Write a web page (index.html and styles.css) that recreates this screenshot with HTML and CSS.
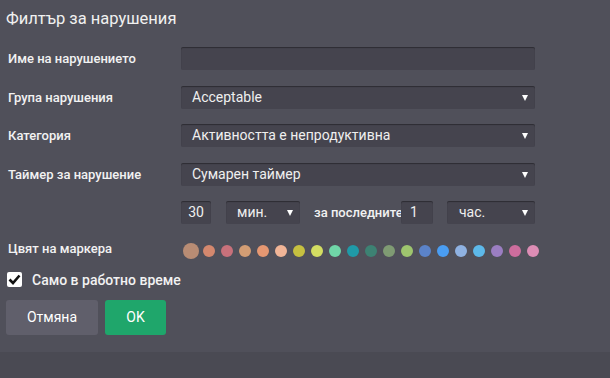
FILE: index.html
```html
<!DOCTYPE html>
<html lang="bg">
<head>
  <meta charset="UTF-8">
  <title>Филтър за нарушения</title>
  <link rel="stylesheet" href="styles.css">
</head>
<body>
  <div class="dialog">
    <h1 class="title">Филтър за нарушения</h1>

    <div class="row">
      <label class="label">Име на нарушението</label>
      <div class="field input wide"></div>
    </div>

    <div class="row">
      <label class="label">Група нарушения</label>
      <div class="field select wide">Acceptable</div>
    </div>

    <div class="row">
      <label class="label">Категория</label>
      <div class="field select wide">Активността е непродуктивна</div>
    </div>

    <div class="row">
      <label class="label">Таймер за нарушение</label>
      <div class="field select wide">Сумарен таймер</div>
    </div>

    <div class="row">
      <span class="label"></span>
      <div class="field input num-a">30</div>
      <div class="field select unit-a">мин.</div>
      <span class="inline-text">за последните</span>
      <div class="field input num-b">1</div>
      <div class="field select unit-b">час.</div>
    </div>

    <div class="row color-row">
      <label class="label">Цвят на маркера</label>
      <div class="dots">
        <span class="dot selected" style="background:#b88c74"></span>
        <span class="dot" style="background:#d4886e"></span>
        <span class="dot" style="background:#c8717b"></span>
        <span class="dot" style="background:#d29d74"></span>
        <span class="dot" style="background:#e69872"></span>
        <span class="dot" style="background:#f1b597"></span>
        <span class="dot" style="background:#c6c040"></span>
        <span class="dot" style="background:#d3dd62"></span>
        <span class="dot" style="background:#70d6a8"></span>
        <span class="dot" style="background:#1f9aa8"></span>
        <span class="dot" style="background:#3d8273"></span>
        <span class="dot" style="background:#7f9b73"></span>
        <span class="dot" style="background:#9ec56e"></span>
        <span class="dot" style="background:#5b83c9"></span>
        <span class="dot" style="background:#4a9df2"></span>
        <span class="dot" style="background:#8fb2e2"></span>
        <span class="dot" style="background:#5db9ea"></span>
        <span class="dot" style="background:#9b7ec2"></span>
        <span class="dot" style="background:#cd6d9d"></span>
        <span class="dot" style="background:#dd8db5"></span>
      </div>
    </div>

    <div class="check-row">
      <span class="checkbox">
        <svg width="13" height="11" viewBox="0 0 13 11"><path d="M1.5 5.5 L5 9 L11.5 1.5" fill="none" stroke="#111" stroke-width="2.6"/></svg>
      </span>
      <span class="check-label">Само в работно време</span>
    </div>

    <div class="buttons">
      <button class="btn btn-cancel">Отмяна</button>
      <button class="btn btn-ok">OK</button>
    </div>
  </div>
  <div class="footer"></div>
</body>
</html>
```

FILE: styles.css
```css
body {
  margin: 0;
  background-color: #50505a;
  font-family: Roboto, "Noto Sans", sans-serif;
  color: #f2f2f2;
  height: 378px;
  display: flex;
  flex-direction: column;
}

.dialog {
  height: 352px;
  padding: 0 0 0 8px;
  box-sizing: border-box;
}

.title {
  margin: 0 0 0 -2px;
  padding-top: 9px;
  height: 47px;
  box-sizing: border-box;
  font-size: 16.5px;
  font-weight: 400;
  color: #f0f0f0;
}

.row {
  display: flex;
  align-items: center;
  height: 23px;
  margin-bottom: 15.5px;
}

.label {
  width: 173px;
  flex: none;
  font-size: 13px;
  font-weight: 500;
}

.field {
  height: 23px;
  box-sizing: border-box;
  background-color: #45444e;
  border-radius: 2px;
  box-shadow: inset 0 1px 1px rgba(0, 0, 0, 0.35);
  font-size: 14px;
  line-height: 23px;
  color: #efefef;
  position: relative;
  flex: none;
}

.wide {
  width: 354px;
}

.select {
  padding-left: 11px;
}

.select::after {
  content: "";
  position: absolute;
  right: 7px;
  top: 9px;
  border-left: 3px solid transparent;
  border-right: 3px solid transparent;
  border-top: 6px solid #ffffff;
}

.num-a {
  width: 30px;
  text-align: center;
}

.unit-a {
  width: 74px;
  margin-left: 15px;
}

.inline-text {
  margin-left: 14px;
  width: 87px;
  flex: none;
  white-space: nowrap;
  font-size: 13px;
  font-weight: 500;
}

.num-b {
  width: 32px;
  padding-left: 9px;
}

.unit-b {
  width: 88px;
  margin-left: 14px;
  padding-left: 12px;
}

.color-row {
  height: 20px;
  margin-bottom: 12px;
  position: relative;
  top: 1px;
}

.color-row .label {
  position: relative;
  top: -2px;
}

.dots {
  display: flex;
  align-items: center;
  margin-left: 1px;
}

.dot {
  width: 12px;
  height: 12px;
  border-radius: 50%;
  margin: 0 3px;
}

.dot.selected {
  width: 16px;
  height: 16px;
  margin: 0 1px;
}

.check-row {
  display: flex;
  align-items: center;
  height: 16px;
  margin-top: 3px;
  margin-bottom: 12px;
}

.checkbox {
  width: 15px;
  height: 15px;
  background: #ffffff;
  border-radius: 2px;
  display: flex;
  align-items: center;
  justify-content: center;
  margin-left: -1px;
}

.check-label {
  margin-left: 10px;
  font-size: 14px;
  font-weight: 500;
}

.buttons {
  display: flex;
  gap: 7px;
  margin-left: -2px;
}

.btn {
  height: 35px;
  border: none;
  border-radius: 3px;
  font-family: Roboto, "Noto Sans", sans-serif;
  font-size: 14px;
  color: #ffffff;
}

.btn-cancel {
  width: 92px;
  background-color: #605f6b;
}

.btn-ok {
  width: 61px;
  background-color: #1fa66b;
}

.footer {
  flex: 1;
  background-color: #4a4a53;
}
```
